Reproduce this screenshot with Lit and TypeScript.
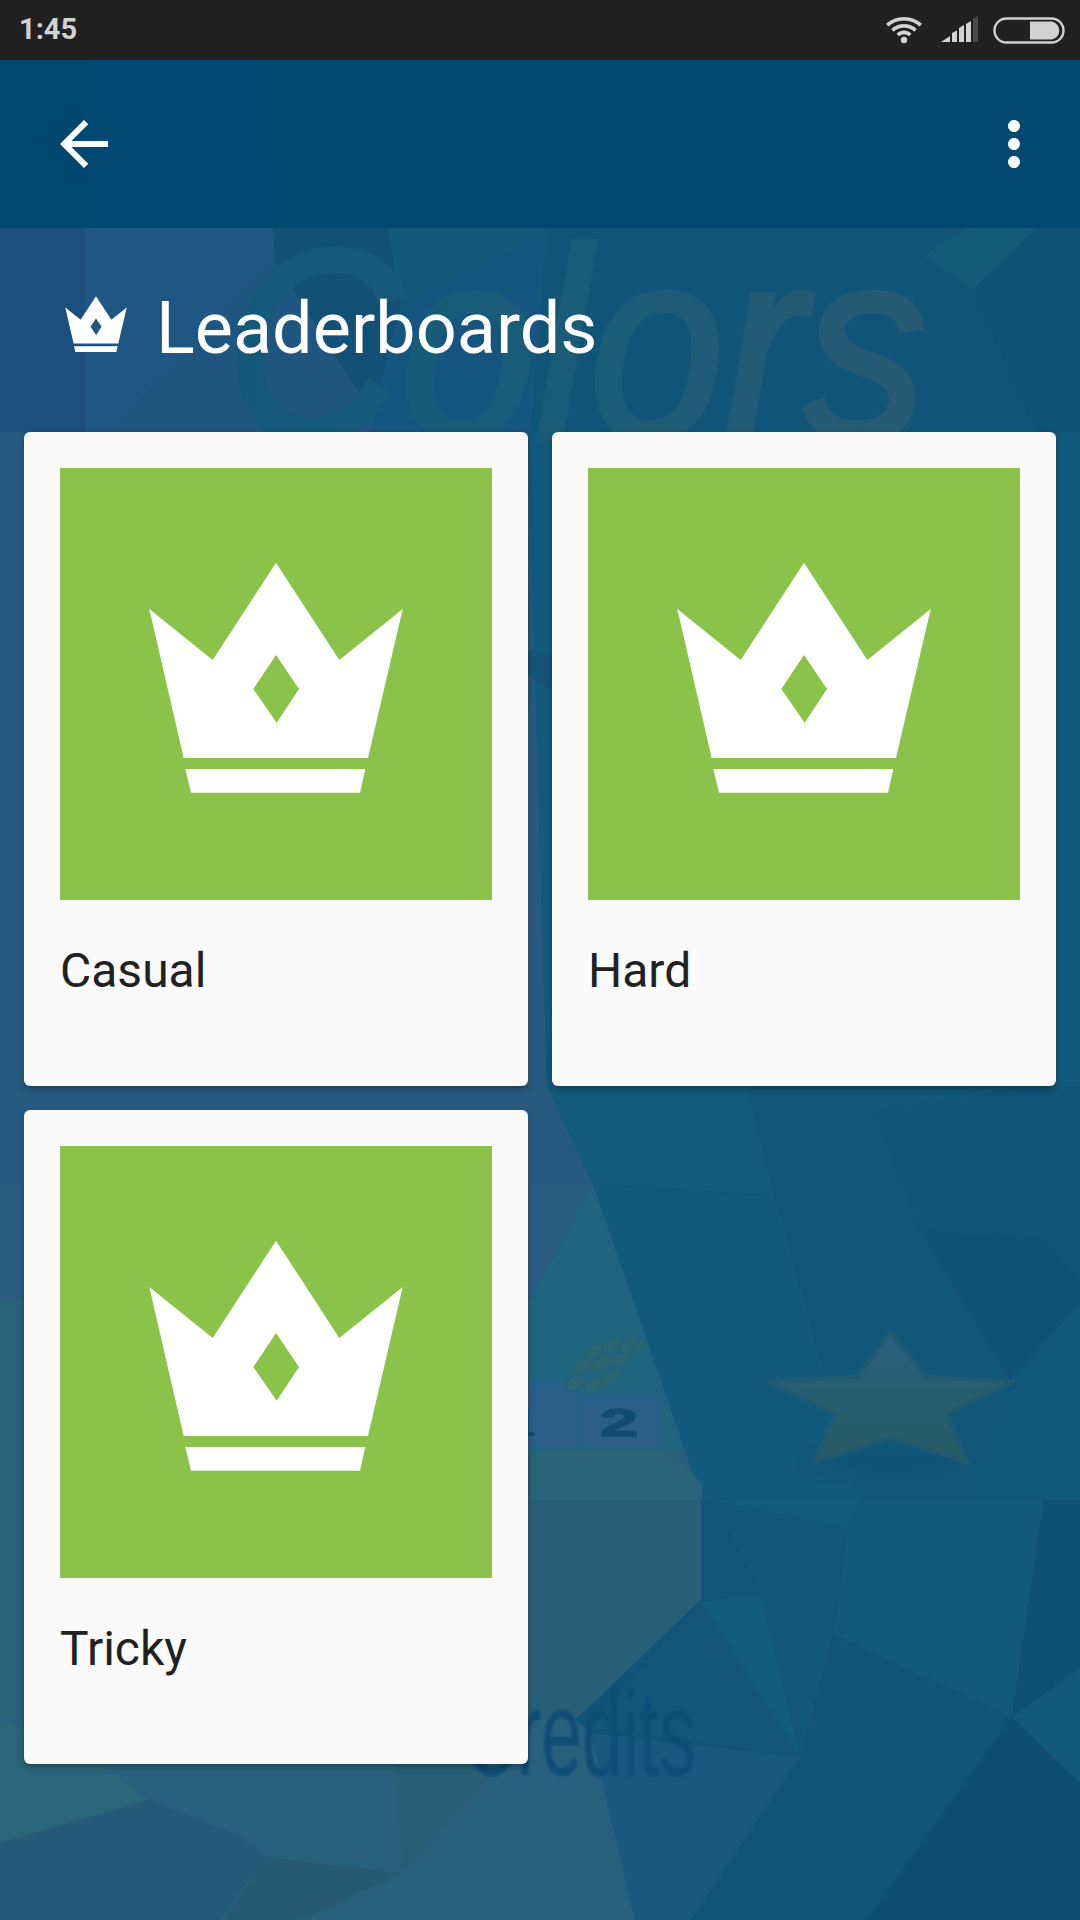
import { LitElement, html, css, svg } from "lit";
import { customElement } from "lit/decorators.js";

const POLYS: [string, string][] = [
  // top band
  ["0,60 270,60 100,432 0,432", "#1c4f7e"],
  ["85,60 270,60 275,260 110,432 85,432", "#1e5684"],
  ["110,432 275,260 373,415 373,432", "#1f5680"],
  ["262,60 364,60 400,308 373,415 275,260", "#125175"],
  ["364,60 600,60 560,228 400,308", "#12597a"],
  ["400,308 560,228 530,432 373,432 373,415", "#155580"],
  ["560,60 1080,60 1080,440 530,440", "#105578"],
  ["924,255 966,228 1037,228 972,290", "#125c78"],
  ["972,290 1037,228 1080,228 1080,440 1040,440", "#105276"],
  // left and centre behind cards
  ["0,432 528,432 547,1086 593,1184 0,1184", "#265a7e"],
  ["528,432 1080,432 1080,1086 547,1086", "#125a7c"],
  ["528,650 552,655 552,690 528,675", "#155375"],
  ["0,1184 593,1184 530,1300 0,1400", "#295e80"],
  ["0,1400 530,1300 593,1184 702,1483 702,1500 0,1764", "#1f6580"],
  ["0,1450 701,1450 701,1600 575,1720 0,1764", "#276078"],
  ["0,1300 60,1300 60,1720 0,1764", "#28637c"],
  // right middle
  ["547,1086 747,1086 775,1196 593,1184", "#125b7a"],
  ["747,1086 1040,1086 872,1111 775,1196", "#105778"],
  ["593,1184 775,1196 860,1500 702,1500", "#115a7c"],
  ["775,1196 872,1111 921,1231 1010,1379 965,1500 860,1500", "#115878"],
  ["872,1111 1040,1086 1080,1086 1080,1279 1038,1239 921,1231", "#105477"],
  ["921,1231 1038,1239 1080,1279 1080,1303 1010,1379", "#0f5276"],
  ["1010,1379 1080,1303 1080,1500 965,1500", "#105878"],
  // lower right
  ["701,1500 712,1500 761,1595 701,1602", "#12557a"],
  ["712,1500 847,1528 833,1635 800,1757 761,1595", "#12587c"],
  ["847,1500 1044,1500 1012,1717 833,1635 847,1528", "#115a7c"],
  ["712,1500 860,1500 847,1528", "#115c7c"],
  ["833,1635 1012,1717 867,1920 800,1920 800,1757", "#115478"],
  ["800,1757 867,1920 691,1920", "#11547a"],
  ["1012,1717 1080,1783 1080,1920 867,1920", "#0f4d72"],
  ["1012,1717 1080,1668 1080,1783", "#115a7a"],
  ["1044,1500 1080,1500 1080,1668 1012,1717", "#0f5077"],
  ["701,1602 761,1595 800,1757", "#125d7c"],
  ["701,1602 800,1757 591,1727", "#155678"],
  ["591,1733 800,1757 691,1920 635,1920", "#1a5880"],
  // bottom
  ["0,1720 575,1720 591,1733 635,1920 0,1920", "#28617e"],
  ["0,1720 100,1764 150,1800 0,1843", "#29667a"],
  ["0,1843 150,1800 236,1835 266,1857 220,1920 0,1920", "#27597a"],
  ["266,1857 403,1873 300,1920 225,1920", "#285a74"],
  ["396,1764 500,1764 403,1873", "#285e76"],
  // podium base
  ["530,1449 665,1449 702,1483 702,1500 530,1500", "#2a6478"],
];

const crown = (cls: string) => html`<svg class=${cls} viewBox="89 94 254 231" aria-hidden="true">
  <path fill="#fff" fill-rule="evenodd" d="M216 94.7 279.3 192 342.7 141 308 290H123.7L89.3 141 152.7 192ZM216 187 193.3 221 216.7 254.7 239 221Z"/>
  <path fill="#fff" d="M125.3 301H305.3L300 324.7H131Z"/>
</svg>`;

const LAUREL = [
  [576, 1383, 11, 7], [596, 1385, 13, 7], [612, 1377, 11, 6], [584, 1366, 13, 7], [602, 1363, 12, 7],
  [620, 1360, 11, 6], [594, 1351, 11, 6], [612, 1346, 11, 6], [628, 1346, 10, 6], [640, 1345, 7, 5], [632, 1340, 7, 4],
];

@customElement("app-root")
export class AppRoot extends LitElement {
  static styles = css`
    :host { display: block; position: relative; width: 1080px; height: 1920px; overflow: hidden; font-family: Roboto, "Liberation Sans", sans-serif; background: #11527a; }
    .bg { position: absolute; inset: 0; width: 1080px; height: 1920px; }
    .ghost { font-family: "Liberation Sans", sans-serif; font-style: italic; filter: blur(0.5px); }
    .credits { font-family: "Liberation Sans", sans-serif; filter: blur(0.8px); }
    .digit { font-family: "Liberation Sans", sans-serif; font-weight: 700; }
    .shade { filter: blur(7px); }
    .page { position: relative; display: flex; flex-direction: column; }
    .status { height: 60px; background: #212121; display: flex; align-items: center; padding: 0 15px 0 19px; color: #d2d2d2; font-size: 29px; font-weight: 700; box-sizing: border-box; }
    .time { flex: 1; line-height: 60px; position: relative; top: -1px; }
    .wifi { width: 38px; height: 28px; margin-top: -1px; }
    .signal { width: 37px; height: 28px; margin-left: 18px; }
    .battery { width: 72px; height: 27px; margin-left: 15px; }
    .toolbar { height: 168px; background: rgba(0, 72, 113, 0.94); display: flex; align-items: center; justify-content: space-between; padding: 0 30px 0 48px; }
    .toolbar svg { width: 72px; height: 72px; fill: #fff; display: block; }
    .title { height: 204px; display: flex; align-items: center; padding: 0 0 0 65px; color: #fff; box-sizing: border-box; }
    .title-crown { width: 62px; height: 56px; margin-top: -13px; }
    h1 { margin: -2px 0 0 29px; font-size: 72px; font-weight: 400; line-height: 84px; }
    .grid { display: grid; grid-template-columns: 504px 504px; gap: 24px; padding: 0 24px; }
    .card { background: #fafafa; border-radius: 6px; padding: 36px 36px 87px; box-shadow: 0 3px 6px rgba(0,0,0,.3); }
    .thumb { background: #8bc34a; width: 432px; height: 432px; display: flex; align-items: center; justify-content: center; }
    .card-crown { width: 254px; height: 231px; display: block; margin-top: -14px; }
    .label { margin: 43px 0 0; font-size: 48px; line-height: 56px; color: #212121; font-weight: 400; }
  `;

  render() {
    return html`
      <svg class="bg" viewBox="0 0 1080 1920" aria-hidden="true">
        <defs>
          <linearGradient id="gt" gradientUnits="userSpaceOnUse" x1="225" y1="0" x2="925" y2="0">
            <stop offset="0" stop-color="#15597a"/><stop offset="0.5" stop-color="#1a5c78"/><stop offset="1" stop-color="#285a74"/>
          </linearGradient>
          <linearGradient id="gs" x1="0" y1="0" x2="0" y2="1">
            <stop offset="0" stop-color="#2a6084"/><stop offset="0.45" stop-color="#285f70"/><stop offset="1" stop-color="#285a66"/>
          </linearGradient>
        </defs>
        ${POLYS.map(([p, c]) => svg`<polygon points=${p} fill=${c}/>`)}
        <text class="ghost" x="226" y="438" font-size="270" fill="url(#gt)" stroke="url(#gt)" stroke-width="6" textLength="700" lengthAdjust="spacingAndGlyphs">Colors</text>
        <rect x="500" y="1379" width="77" height="69" fill="#2a6088"/>
        <rect x="500" y="1379" width="72" height="10" fill="#25618a"/>
        <rect x="579" y="1394" width="83" height="54" fill="#2a6088"/>
        <rect x="579" y="1394" width="78" height="10" fill="#25618a"/>
        <text class="digit" x="514" y="1436" font-size="39" fill="#0f4d75">1</text>
        ${LAUREL.map(([x, y, a, b]) => svg`<ellipse cx=${x} cy=${y} rx=${a} ry=${b} transform="rotate(-28 ${x} ${y})" fill="#2a6672" stroke="#256078" stroke-width="1.5"/>`)}
        <text class="digit" x="600" y="1436" font-size="39" fill="#0f4d75" stroke="#0f4d75" stroke-width="1.5" textLength="38" lengthAdjust="spacingAndGlyphs">2</text>
        <ellipse class="shade" cx="890" cy="1462" rx="85" ry="12" fill="#0c4670" opacity="0.3"/>
        <polygon points="890.6,1332 925.6,1377 1014,1381 946.7,1414 967.7,1462.7 890.6,1437.7 814,1462.7 835,1414 768.5,1381 857,1377" fill="url(#gs)" stroke="#205a72" stroke-width="4" stroke-linejoin="round"/>
        <text class="credits" x="464" y="1775" font-size="120" fill="#0f4d75" textLength="232" lengthAdjust="spacingAndGlyphs">Credits</text>
      </svg>
      <div class="page">
        <div class="status">
          <span class="time">1:45</span>
          <svg class="wifi" viewBox="0 0 38 28" fill="none" stroke="#d2d2d2" stroke-width="3.6" aria-hidden="true">
            <path d="M2.2 9.2A25 25 0 0 1 35.8 9.2"/>
            <path d="M7.4 14.4A17 17 0 0 1 30.6 14.4"/>
            <path d="M12.7 18.8A9.5 9.5 0 0 1 25.3 18.8"/>
            <circle cx="19" cy="24" r="3.2" fill="#d2d2d2" stroke="none"/>
          </svg>
          <svg class="signal" viewBox="0 0 37 28" aria-hidden="true">
            <polygon fill="#d2d2d2" points="0,26 9,20 9,26"/>
            <polygon fill="#d2d2d2" points="11,17 16,14.5 16,26 11,26"/>
            <polygon fill="#d2d2d2" points="18,12 23,9 23,26 18,26"/>
            <polygon fill="#d2d2d2" points="25,8 30,5 30,26 25,26"/>
            <polygon fill="#4a4a4a" points="32,3 37,0 37,26 32,26"/>
          </svg>
          <svg class="battery" viewBox="0 0 72 27" aria-hidden="true">
            <rect x="1.5" y="1.5" width="69" height="24" rx="12" fill="none" stroke="#d2d2d2" stroke-width="2.4"/>
            <path d="M37 4.5H59A9.2 9.2 0 0 1 59 22.500H37Z" fill="#d2d2d2"/>
          </svg>
        </div>
        <div class="toolbar">
          <svg viewBox="0 0 24 24" aria-hidden="true"><path d="M20 11H7.83l5.59-5.59L12 4l-8 8 8 8 1.41-1.41L7.83 13H20v-2z"/></svg>
          <svg viewBox="0 0 24 24" aria-hidden="true"><path d="M12 8c1.1 0 2-.9 2-2s-.9-2-2-2-2 .9-2 2 .9 2 2 2zm0 2c-1.100 0-2 .9-2 2s.9 2 2 2 2-.9 2-2-.9-2-2-2zm0 6c-1.100 0-2 .9-2 2s.9 2 2 2 2-.9 2-2-.9-2-2-2z"/></svg>
        </div>
        <div class="title">
          ${crown("title-crown")}
          <h1>Leaderboards</h1>
        </div>
        <div class="grid">
          ${["Casual", "Hard", "Tricky"].map((n) => html`
            <div class="card">
              <div class="thumb">${crown("card-crown")}</div>
              <div class="label">${n}</div>
            </div>`)}
        </div>
      </div>
    `;
  }
}
